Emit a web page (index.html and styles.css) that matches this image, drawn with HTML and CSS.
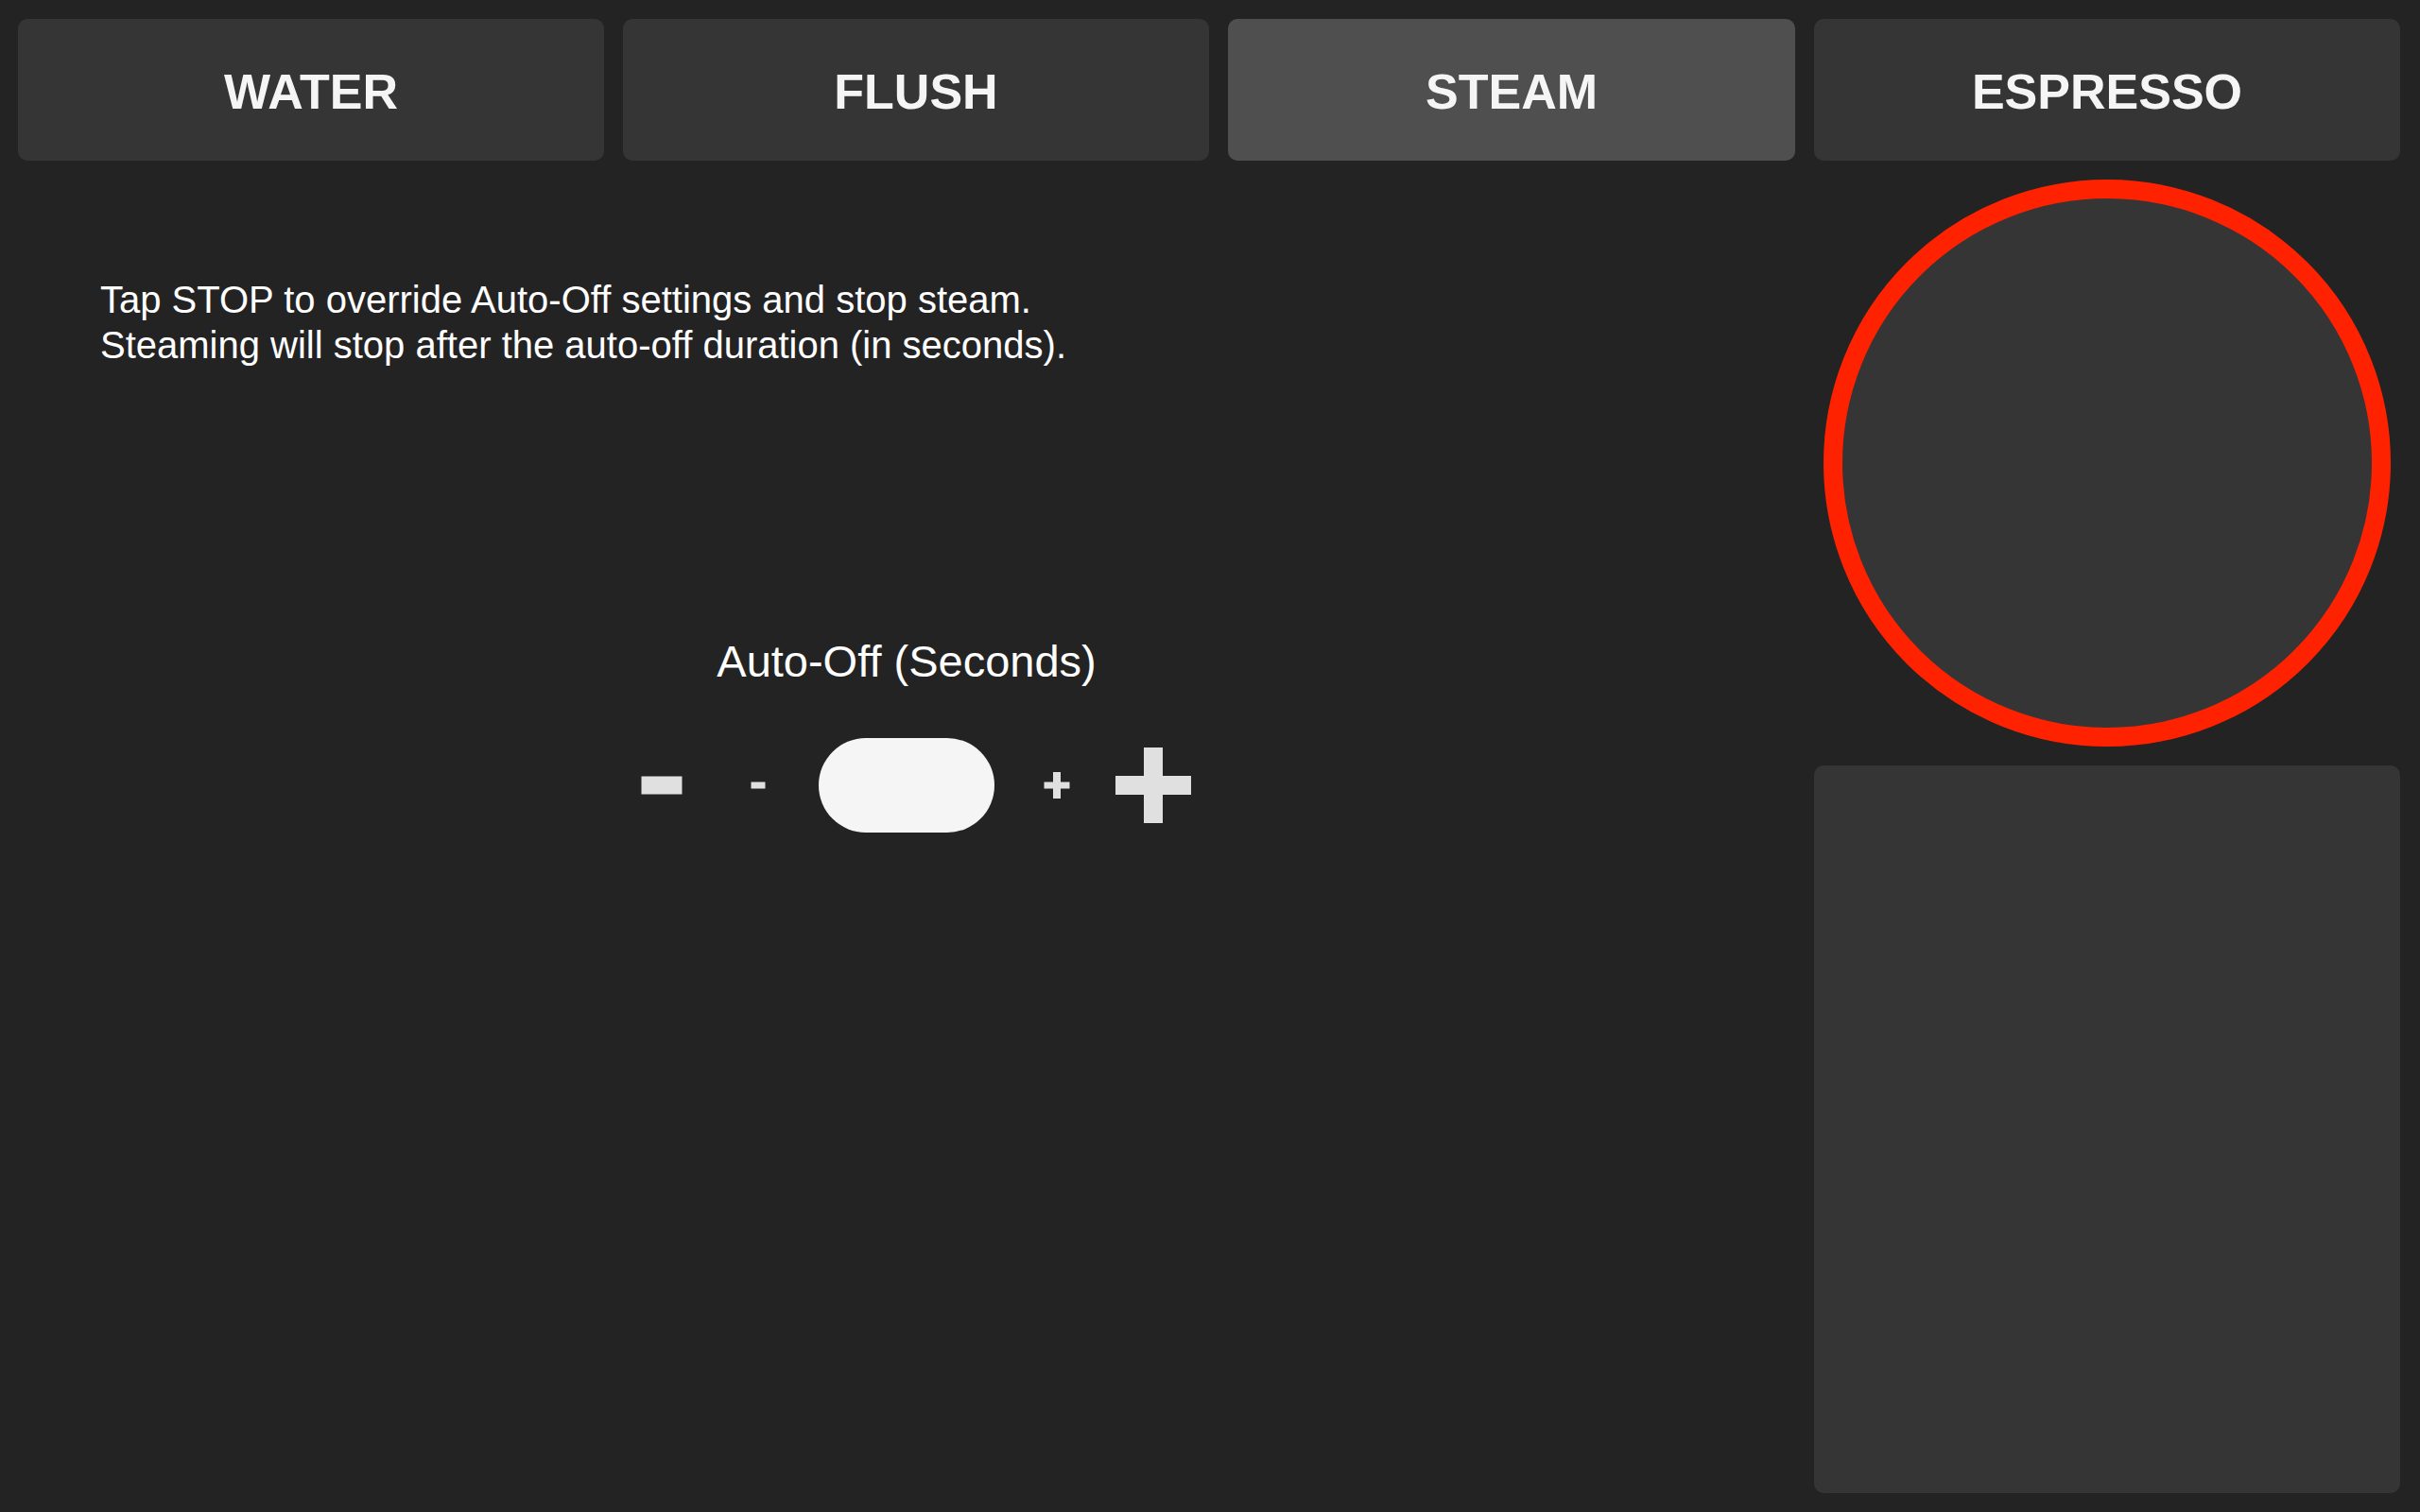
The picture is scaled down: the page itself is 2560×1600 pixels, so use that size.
FILE: index.html
```html
<!DOCTYPE html>
<html lang="en">
<head>
<meta charset="utf-8">
<title>Steam</title>
<link rel="stylesheet" href="styles.css">
</head>
<body>
<div class="screen">
  <div class="tab">WATER</div>
  <div class="tab">FLUSH</div>
  <div class="tab tab-active">STEAM</div>
  <div class="tab">ESPRESSO</div>

  <section class="content">
    <p class="info">Tap STOP to override Auto-Off settings and stop steam.<br>Steaming will stop after the auto-off duration (in seconds).</p>
    <div class="label">Auto-Off (Seconds)</div>
    <div class="stepper">
      <div class="step step-big step-dec" role="button" aria-label="decrease by 10"><span class="bar-h big-minus"></span></div>
      <div class="step step-small" role="button" aria-label="decrease by 1"><span class="bar-h small-minus"></span></div>
      <div class="value"></div>
      <div class="step step-small step-inc" role="button" aria-label="increase by 1"><span class="bar-h small-plus-h"></span><span class="bar-v small-plus-v"></span></div>
      <div class="step step-big" role="button" aria-label="increase by 10"><span class="bar-h big-plus-h"></span><span class="bar-v big-plus-v"></span></div>
    </div>
  </section>

  <div class="dial-cell"><div class="dial"></div></div>
  <div class="panel"></div>
</div>
</body>
</html>
```

FILE: styles.css
```css
html, body {
  margin: 0;
  padding: 0;
  background: #232323;
}
body {
  width: 2560px;
  height: 1600px;
  overflow: hidden;
  font-family: "Liberation Sans", Arial, Helvetica, sans-serif;
  color: #ffffff;
}
.screen {
  display: grid;
  grid-template-columns: 620px 620px 600px 620px;
  grid-template-rows: 150px 600px 770px;
  gap: 20px;
  padding: 20px 21px 20px 19px;
  box-sizing: border-box;
  width: 2560px;
  height: 1600px;
}
.tab {
  background: #353535;
  border-radius: 10px;
  display: flex;
  align-items: center;
  justify-content: center;
  padding-top: 3px;
  box-sizing: border-box;
  font-weight: bold;
  font-size: 52px;
  color: #f5f5f5;
}
.tab-active {
  background: #4f4f4f;
}
.content {
  grid-column: 1 / 4;
  grid-row: 2 / 4;
  display: flex;
  flex-direction: column;
  align-items: center;
}
.info {
  align-self: flex-start;
  margin: 103px 0 0 87px;
  font-size: 40px;
  line-height: 48px;
}
.label {
  margin-top: 283px;
  font-size: 47px;
  line-height: 56px;
}
.stepper {
  margin-top: 53px;
  display: flex;
  align-items: center;
  gap: 44px;
  height: 100px;
}
.step {
  position: relative;
  height: 100px;
}
.step-big { width: 80px; }
.step-small { width: 40px; }
.step-dec { margin-left: 2px; margin-right: -2px; }
.step-inc { margin-left: 2px; margin-right: -2px; }
.bar-h, .bar-v {
  position: absolute;
  left: 50%;
  top: 50%;
  background: #e0e0e0;
  transform: translate(-50%, -50%);
}
.big-minus { width: 43px; height: 19px; }
.small-minus { width: 15px; height: 7px; }
.small-plus-h { width: 27px; height: 7px; }
.small-plus-v { width: 8px; height: 28px; }
.big-plus-h { width: 80px; height: 20px; }
.big-plus-v { width: 20px; height: 80px; }
.value {
  width: 186px;
  height: 100px;
  border-radius: 50px;
  background: #f5f5f5;
}
.dial-cell {
  grid-column: 4;
  grid-row: 2;
  display: flex;
  justify-content: center;
}
.dial {
  width: 600px;
  height: 600px;
  box-sizing: border-box;
  border: 20px solid #ff2200;
  border-radius: 50%;
  background: #353535;
}
.panel {
  grid-column: 4;
  grid-row: 3;
  background: #353535;
  border-radius: 10px;
}
```
